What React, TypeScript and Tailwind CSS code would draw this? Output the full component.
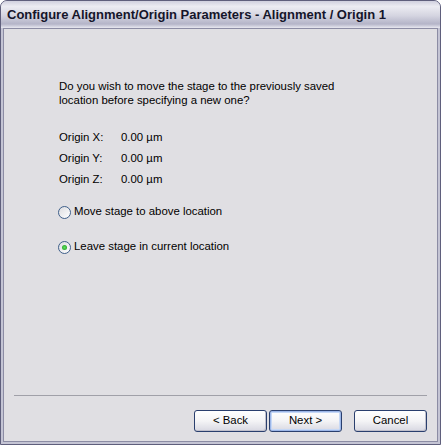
const font = { fontFamily: '"Liberation Sans", Arial, sans-serif' };

const Radio = ({ checked, label }: { checked?: boolean; label: string }) => (
  <label className="flex items-center gap-[3px] h-[14px]">
    <span className="relative flex h-[13px] w-[13px] items-center justify-center rounded-full border border-[#3f5f8a] bg-gradient-to-br from-[#dcdce0] to-white">
      {checked && (
        <span className="h-[5px] w-[5px] rounded-full bg-[radial-gradient(circle,#5fe05f,#1a961a)]" />
      )}
    </span>
    <span>{label}</span>
  </label>
);

const Button = ({ label, primary }: { label: string; primary?: boolean }) => (
  <button
    className={
      'h-[22px] w-[73px] shrink-0 rounded-[3px] border border-[#2a3f6e] bg-gradient-to-b from-white via-[#f4f4f6] to-[#d8d8e2] text-[11.4px] text-black ' +
      (primary ? 'shadow-[inset_0_0_0_1px_#9cb6e8,inset_0_0_0_2px_#c6d8f6]' : 'shadow-[inset_-1px_-1px_0_#c0c0cc]')
    }
    style={font}
  >
    {label}
  </button>
);

export default function App() {
  return (
    <div className="h-[445px] w-[441px] bg-white" style={font}>
      <div className="flex h-full w-full flex-col overflow-hidden rounded-t-[7px] border border-[#5f5f7c] bg-[#c4c4d4]">
        {/* title bar */}
        <div className="flex h-[27px] shrink-0 items-center bg-[linear-gradient(to_bottom,#d0d0de_0%,#ececf2_20%,#d4d4e0_55%,#b4b4c8_85%,#e8e8f0_100%)] pl-[6px]">
          <span className="text-[13px] font-bold text-[#15152a]" style={font}>
            Configure Alignment/Origin Parameters - Alignment / Origin 1
          </span>
        </div>

        {/* client area */}
        <div className="mx-[2px] mb-[2px] flex flex-1 flex-col border border-[#8c8ca4] bg-[#e0dfe3] text-[11.4px] text-black">
          <div className="flex flex-1 flex-col pl-[55px] pt-[50px]">
            <p className="leading-[14px]">
              Do you wish to move the stage to the previously saved
              <br />
              location before specifying a new one?
            </p>

            <div className="mt-[23px] flex flex-col gap-[7px] leading-[14px]">
              <div className="flex">
                <span className="w-[62px]">Origin X:</span>
                <span>0.00 µm</span>
              </div>
              <div className="flex">
                <span className="w-[62px]">Origin Y:</span>
                <span>0.00 µm</span>
              </div>
              <div className="flex">
                <span className="w-[62px]">Origin Z:</span>
                <span>0.00 µm</span>
              </div>
            </div>

            <div className="mt-[19px] -ml-[1px] flex flex-col gap-[21px]">
              <Radio label="Move stage to above location" />
              <Radio checked label="Leave stage in current location" />
            </div>
          </div>

          <div className="mx-[10px] h-[2px] border-t border-[#a0a0a8] border-b-white" />

          <div className="flex justify-end pb-[9px] pr-[10px] pt-[13px]">
            <Button label="< Back" />
            <div className="w-[2px]" />
            <Button label="Next >" primary />
            <div className="w-[12px]" />
            <Button label="Cancel" />
          </div>
        </div>
      </div>
    </div>
  );
}
